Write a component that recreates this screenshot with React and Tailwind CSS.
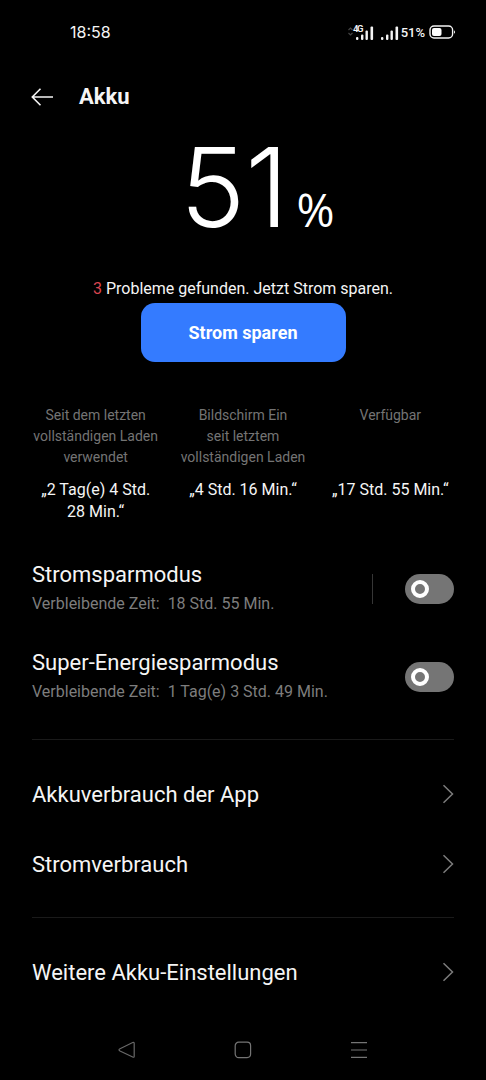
import React from "react";

function StatusBar() {
  return (
    <div className="flex h-16 items-center justify-between pl-[70px] pr-[30px]">
      <span className="font-[Inter] text-[16px] leading-none">18:58</span>
      <div className="flex items-center">
        <svg width="54" height="20" viewBox="0 0 54 20" fill="#f4f4f4">
          <path d="M1.5 8l2-2 2 2M1.5 11l2 2 2-2" fill="none" stroke="#444" strokeWidth="1.2" />
          <text x="6" y="10" fontSize="9.5" fontWeight="600" fontFamily="Roboto" textLength="10.5">4G</text>
          <rect x="9" y="15" width="2.4" height="3" rx="1" />
          <rect x="14" y="12.5" width="2.4" height="5.5" rx="1" />
          <rect x="18.5" y="8.5" width="2.4" height="9.5" rx="1" />
          <rect x="23.5" y="4.5" width="2.6" height="13.5" rx="1" />
          <rect x="34" y="15" width="2.4" height="3" rx="1" />
          <rect x="39" y="12.5" width="2.4" height="5.5" rx="1" />
          <rect x="43.5" y="8.5" width="2.4" height="9.5" rx="1" />
          <rect x="48.5" y="4.5" width="2.6" height="13.5" rx="1" />
        </svg>
        <span className="mr-1 text-[13px] leading-none font-medium">51%</span>
        <svg width="27" height="14" viewBox="0 0 27 14">
          <rect x="1" y="1" width="22.6" height="12" rx="4" fill="none" stroke="#f4f4f4" strokeWidth="1.4" />
          <rect x="3" y="3" width="9.5" height="8" rx="2" fill="#fff" />
          <path d="M25 5.2q2 1.8 0 3.6z" fill="#fff" />
        </svg>
      </div>
    </div>
  );
}

function Toggle() {
  return (
    <div className="flex h-[30px] w-[49px] items-center rounded-full bg-[#757575] pl-[6px]">
      <div className="size-[18px] rounded-full border-4 border-white" />
    </div>
  );
}

function ModeRow({ title, note, split }) {
  return (
    <div className="flex h-[88px] items-center justify-between">
      <div>
        <div className="text-[22px] leading-[30px]">{title}</div>
        <div className="text-[16px] leading-[28px] whitespace-pre text-[#7d7d7d]">{note}</div>
      </div>
      <div className="flex items-center gap-8">
        {split && <div className="h-[30px] w-px bg-[#363636]" />}
        <Toggle />
      </div>
    </div>
  );
}

function LinkRow({ title }) {
  return (
    <div className="flex h-[70px] items-center justify-between text-[22px]">
      <span>{title}</span>
      <svg width="12" height="20" viewBox="0 0 12 20" fill="none" stroke="#7c7c7c" strokeWidth="1.5">
        <path d="M1.5 1.2L10.5 10L1.5 18.8" />
      </svg>
    </div>
  );
}

function Stat({ label, value }) {
  return (
    <div className="flex flex-col text-center whitespace-pre-line">
      <div className="h-[63px] text-[14px] leading-[21px] text-[#747474]">{label}</div>
      <div className="mt-[11px] text-[16px] leading-[22px]">{value}</div>
    </div>
  );
}

export default function App() {
  return (
    <div className="flex h-[1080px] w-[486px] flex-col overflow-hidden bg-black font-[Roboto,sans-serif] text-[#f5f5f5]">
      <StatusBar />
      <header className="flex h-[66px] items-center pl-[31px]">
        <svg width="23" height="20" viewBox="0 0 23 20" fill="none" stroke="#f5f5f5" strokeWidth="1.6">
          <path d="M22 10H1.5M9.5 1.8L1.3 10l8.2 8.2" />
        </svg>
        <h1 className="ml-[25px] text-[22px] leading-none font-bold">Akku</h1>
      </header>
      <div className="flex h-[146px] items-baseline pl-[180px] text-white">
        <span className="font-[Inter] text-[110px] leading-[114px] font-light">51</span>
        <span className="ml-2 font-['Open_Sans'] text-[46px] leading-none">%</span>
      </div>
      <p className="h-[27px] text-center text-[16px] leading-[26px]">
        <span className="text-[#d9454f]">3</span> Probleme gefunden. Jetzt Strom sparen.
      </p>
      <button className="h-[59px] w-[205px] self-center rounded-[14px] bg-[#347bff] text-[18px] font-bold text-white">
        Strom sparen
      </button>
      <div className="mx-[22px] mt-[43px] grid h-[140px] grid-cols-3">
        <Stat label={"Seit dem letzten\nvollständigen Laden\nverwendet"} value={"„2 Tag(e) 4 Std.\n28 Min.“"} />
        <Stat label={"Bildschirm Ein\nseit letztem\nvollständigen Laden"} value="„4 Std. 16 Min.“" />
        <Stat label="Verfügbar" value="„17 Std. 55 Min.“" />
      </div>
      <main className="mx-8 w-[422px]">
        <ModeRow title="Stromsparmodus" note="Verbleibende Zeit:  18 Std. 55 Min." split />
        <ModeRow title="Super-Energiesparmodus" note="Verbleibende Zeit:  1 Tag(e) 3 Std. 49 Min." />
        <div className="mt-[18px] h-px bg-[#1a1a1a]" />
        <div className="mt-[19px]">
          <LinkRow title="Akkuverbrauch der App" />
          <LinkRow title="Stromverbrauch" />
        </div>
        <div className="mt-[18px] h-px bg-[#1a1a1a]" />
        <div className="mt-[19px]">
          <LinkRow title="Weitere Akku-Einstellungen" />
        </div>
      </main>
      <nav className="mt-auto flex h-[60px] items-center justify-between pr-[118px] pl-[118px]">
        <svg width="18" height="18" viewBox="0 0 18 18" fill="none" stroke="#686868" strokeWidth="1.2">
          <path d="M2 7.7L14.7 1.5Q16.2 1 16.2 2.5V15.2Q16.2 16.8 14.7 16L2 10Q0 8.8 2 7.7Z" />
        </svg>
        <svg width="18" height="18" viewBox="0 0 18 18" fill="none" stroke="#747474" strokeWidth="1.2">
          <rect x="1.2" y="1.2" width="15.4" height="15.4" rx="3.5" />
        </svg>
        <svg width="18" height="18" viewBox="0 0 18 18" fill="none" stroke="#747474" strokeWidth="1.2">
          <path d="M1 1.7h16M1 9h16M1 16.4h16" />
        </svg>
      </nav>
    </div>
  );
}
